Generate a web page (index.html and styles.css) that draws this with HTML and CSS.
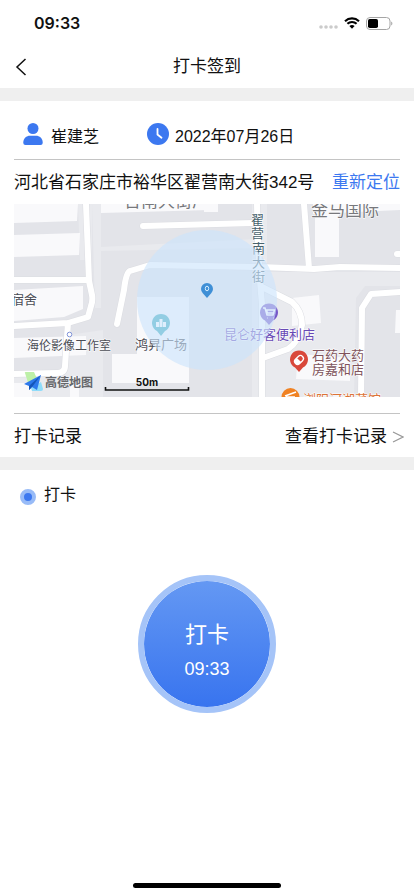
FILE: index.html
```html
<!DOCTYPE html>
<html lang="zh-CN">
<head>
    <meta charset="UTF-8">
    <meta name="viewport" content="width=device-width, initial-scale=1.0">
    <title>打卡签到</title>
    <link rel="stylesheet" href="styles.css">
</head>
<body>
    <div class="status-bar">
        <span class="status-time">09:33</span>
        <div class="status-icons">
            <svg width="20" height="4" viewBox="0 0 20 4" fill="#cbcbcb" aria-hidden="true">
                <circle cx="3" cy="2" r="1.8"/>
                <circle cx="8" cy="2" r="1.8"/>
                <circle cx="13" cy="2" r="1.8"/>
                <circle cx="18" cy="2" r="1.8"/>
            </svg>
            <svg width="16" height="12" viewBox="0 0 16 12" aria-hidden="true">
                <path d="M1 4.2a10.2 10.2 0 0 1 14 0M3.4 6.8a6.6 6.6 0 0 1 9.2 0" fill="none" stroke="#000" stroke-width="2.1"/>
                <path d="M8 11.8 5.4 9.1a3.8 3.8 0 0 1 5.2 0z"/>
            </svg>
            <svg width="27" height="13" viewBox="0 0 27 13" aria-hidden="true">
                <rect x=".5" y=".5" width="23.5" height="12" rx="3.5" fill="none" stroke="#a5a5a5"/>
                <rect x="2" y="2" width="10" height="9" rx="1.8"/>
                <path d="M25.2 4.6v4c1.6-.7 1.6-3.3 0-4z" fill="#a5a5a5"/>
            </svg>
        </div>
    </div>

    <header class="nav-bar">
        <button class="back" type="button" aria-label="返回">
            <svg width="12" height="18" viewBox="0 0 12 18" fill="none" stroke="#111" stroke-width="1.5"><path d="M10.5 1 2 9l8.5 8"/></svg>
        </button>
        <h1>打卡签到</h1>
    </header>

    <main>
        <section class="card">
            <div class="info">
                <div class="info-item user">
                    <svg width="20" height="22" viewBox="0 0 20 22" fill="#3c78f0" aria-hidden="true">
                        <circle cx="10" cy="5.5" r="5.5"/>
                        <path d="M.3 19.5C.3 15.5 3.5 12.8 7 12.8h6c3.5 0 6.7 2.7 6.7 6.7 0 1.7-.8 2.5-2.2 2.5h-15C1.1 22 .3 21.2.3 19.5z"/>
                    </svg>
                    <span>崔建芝</span>
                </div>
                <div class="info-item">
                    <svg width="22" height="22" viewBox="0 0 22 22" aria-hidden="true">
                        <circle cx="11" cy="11" r="11" fill="#3c78f0"/>
                        <path d="M10.5 6v5.5l4 3.3" fill="none" stroke="#fff" stroke-width="1.8" stroke-linecap="round"/>
                    </svg>
                    <span>2022年07月26日</span>
                </div>
            </div>

            <div class="address">
                <span>河北省石家庄市裕华区翟营南大街342号</span>
                <button class="relocate" type="button">重新定位</button>
            </div>

            <svg class="map" viewBox="14 204 386 193" role="img" aria-label="地图">
                <rect x="14" y="204" width="386" height="193" fill="#e3e4e9"/>

                <!-- blocks -->
                <g fill="#e9eaee">
                    <path d="M92 204h9v43l156-8v9L101 251v57h-6zM252 204h15v193h-15zM267 272h133v14h-35l-9 12-2 99h-90z"/>
                    <path d="M68 335l35-5v67H14v-22h50zM78 204h14v56h-12z"/>
                </g>
                <g fill="#f9f9fb">
                    <path d="M14 204h64l-1 17-63 2zM14 235l66-2-1 22-65 2zM101 204h109v6l-109 3zM14 290l69-4v23l-19 8-50 4zM14 338l72-2v19l-72 3z"/>
                    <path d="M137 297h52v86h-77v-29h25zM204 204h14v8h-14zM315 211h24v46h-24zM313 204h87v6l-87 4zM292 298l27-3 2 28-29 3zM298 354l52 4v23l-54-2zM396 310h4v23h-5zM14 383h18v14H14zM70 376h9v21h-9z"/>
                </g>

                <!-- roads -->
                <g class="road-edge">
                    <path id="roads" d="M86 204l3 77 3 14q1 5-1 11l-3 11-20 6-54 3M14 280h75M68 323l-3 43q0 7-8 7l-43 1M143 226l110-3M117 324l7-34q2-18 6-19l20-6 110 2 54 2 26-2 60 1M257 204q1 60 5 100v93M304 204l5 64M262 287l30 15q10 9 10 23-3 17-14 24l-25 9M400 292l-29 2-9 14-1 89M397 254h6"/>
                </g>
                <use href="#roads" class="road"/>

                <!-- place names -->
                <g class="place grey">
                    <text x="124" y="207">台南大街厂</text>
                    <text x="311" y="216">金马国际</text>
                </g>
                <g class="place">
                    <text x="11" y="304">宿舍</text>
                    <text class="small" x="27" y="350">海伦影像工作室</text>
                    <text x="135" y="349">鸿昇广场</text>
                </g>
                <g class="place street">
                    <text x="251" y="224">翟</text>
                    <text x="251" y="238">营</text>
                    <text x="252" y="253">南</text>
                    <text x="252" y="267">大</text>
                    <text x="252" y="281">街</text>
                </g>
                <text class="place shop" x="224" y="339">昆仑好客便利店</text>
                <g class="place pharmacy">
                    <text x="312" y="360">石药大药</text>
                    <text x="312" y="374">房嘉和店</text>
                </g>
                <text class="place food" x="303" y="404">浏阳河湘菜馆</text>

                <!-- place pins -->
                <circle cx="69.5" cy="334.5" r="2.3" fill="#fff" stroke="#8093d8"/>
                <path d="M161 336l-4-5a9 9 0 1 1 8 0z" fill="#35a9bb"/>
                <path d="M156 327v-5h3v5zm3.5 0v-8h3v8zm3.5 0v-5h3v5z" fill="#fff"/>
                <path d="M269 325l-4-4.500a9 9 0 1 1 8 0z" fill="#7556c7"/>
                <path d="M263 308h2l2 7h6l1.5-5h-8l1 3h7M267 318h.5M273 318h.5" fill="none" stroke="#fff" stroke-width="1.5"/>
                <path d="M299 372l-4-4.500a9 9 0 1 1 8 0z" fill="#d9483b"/>
                <g transform="rotate(-45 299 360)">
                    <rect x="294" y="357" width="10" height="6" rx="3" fill="none" stroke="#fff" stroke-width="1.3"/>
                    <path d="M299 357h-2a3 3 0 0 0 0 6h2z" fill="#fff"/>
                </g>
                <circle cx="290.5" cy="397" r="9" fill="#f08223"/>
                <path d="M285 396l11-4M286 397h9" stroke="#fff" stroke-width="1.5"/>

                <!-- accuracy range and current position -->
                <circle cx="207" cy="300" r="70" fill="#cce3fb" fill-opacity=".62"/>
                <path d="M207 298l-4.200-4.700a6 6 0 1 1 8.400 0z" fill="#3f8fd6"/>
                <ellipse cx="207" cy="288.5" rx="1.7" ry="2.3" fill="none" stroke="#d9efff"/>

                <!-- map provider and scale -->
                <path d="M25 373q-1-1 1-1h8l4 9-9 5z" fill="#bdf0a8"/>
                <path d="M31 388l10-6 2 7q0 2-2 2h-9z" fill="#8fdcfa"/>
                <path d="M24 384l17-9-4 15-5-3-3 3v-4z" fill="#2d79ec"/>
                <path d="M29 386l12-11-9 12-3 3z" fill="#1555b8"/>
                <text class="brand" x="45" y="387">高德地图</text>
                <text class="scale" x="147" y="386" text-anchor="middle">50m</text>
                <path d="M105.5 387v3h83v-3" fill="none" stroke="#111" stroke-width="1.6"/>
            </svg>

            <div class="records">
                <span>打卡记录</span>
                <a href="#records">
                    查看打卡记录
                    <svg width="12" height="12" viewBox="0 0 12 12" fill="none" stroke="#999" stroke-width="1.2" aria-hidden="true"><path d="M1 1l10 5-10 5"/></svg>
                </a>
            </div>
        </section>

        <section class="punch">
            <h2><i class="dot"></i>打卡</h2>
            <button class="punch-btn" type="button">
                <span class="punch-label">打卡</span>
                <span class="punch-time">09:33</span>
            </button>
        </section>
    </main>

    <div class="home-indicator"></div>
</body>
</html>
```
FILE: styles.css
```css
* { box-sizing: border-box; }
body {
    display: flex;
    flex-direction: column;
    min-height: 100vh;
    margin: 0;
    background: #fff;
    color: #111;
    font-family: "Liberation Sans", "Noto Sans CJK SC", sans-serif;
    font-size: 17px;
    line-height: 24px;
}
h1, h2 { margin: 0; font-size: 17px; font-weight: 400; }
button { padding: 0; border: 0; background: none; color: inherit; font: inherit; cursor: pointer; }
svg { display: block; flex: none; }

.status-bar {
    display: flex;
    align-items: center;
    justify-content: space-between;
    height: 44px;
    padding: 2px 21px 0 34px;
}
.status-time { font-family: Inter, sans-serif; font-size: 16px; font-weight: 600; }
.status-icons { display: flex; align-items: center; gap: 6px; }
.status-icons svg:first-child { margin-top: 8px; }

.nav-bar {
    display: grid;
    grid-template-columns: 44px 1fr 44px;
    align-items: center;
    height: 44px;
    padding-top: 2px;
    text-align: center;
}
.back { display: flex; align-items: center; height: 40px; padding-left: 15px; }

.card { padding: 0 14px; border: solid #efefef; border-width: 13px 0; }
.info {
    display: flex;
    align-items: center;
    height: 59px;
    padding: 12px 9px 0;
    border-bottom: 1px solid #c4c4c4;
    font-size: 16px;
}
.info-item { display: flex; align-items: flex-end; gap: 6px; }
.info-item svg { margin-bottom: 4px; }
.user { width: 124px; gap: 8px; }

.address {
    display: flex;
    align-items: center;
    justify-content: space-between;
    min-height: 44px;
    padding-top: 2px;
    white-space: nowrap;
}
.relocate { color: #3c78f0; }

.map { width: 100%; height: auto; }
.road-edge { fill: none; stroke: #dcdde2; stroke-width: 7; stroke-linecap: round; stroke-linejoin: round; }
.road { fill: none; stroke: #fff; stroke-width: 6; stroke-linecap: round; stroke-linejoin: round; }
.place {
    fill: #4a4c55;
    stroke: #fff;
    stroke-width: 1px;
    paint-order: stroke;
    font-family: "Noto Sans CJK SC", sans-serif;
    font-size: 13px;
}
.small { font-size: 12px; }
.grey { fill: #77787c; font-size: 17px; }
.street { fill: #49636e; }
.shop { fill: #6849b5; }
.pharmacy { fill: #80535b; }
.food { fill: #dc7337; }
.brand { fill: #66676b; font-family: "Noto Sans CJK SC", sans-serif; font-size: 12px; font-weight: 700; }
.scale { fill: #111; font-family: Inter, sans-serif; font-size: 10px; font-weight: 700; }

.records {
    display: flex;
    align-items: center;
    justify-content: space-between;
    min-height: 44px;
    margin-top: 16px;
    padding-top: 2px;
    border-top: 1px solid #c4c4c4;
}
.records a { display: flex; align-items: center; gap: 5px; margin-right: -4px; color: inherit; text-decoration: none; }

.punch { display: flex; flex-direction: column; padding: 13px 20px; }
.punch h2 { display: flex; align-items: center; gap: 8px; font-size: 16px; }
.dot {
    width: 16px;
    height: 16px;
    margin-top: 4px;
    border: 4px solid #98bbf7;
    border-radius: 50%;
    background: #3c78f0;
}
.punch-btn {
    display: flex;
    flex-direction: column;
    align-items: center;
    justify-content: center;
    gap: 8px;
    align-self: center;
    width: 138px;
    height: 138px;
    margin-top: 68px;
    padding-top: 14px;
    border: 6px solid #a5c4f8;
    border-radius: 50%;
    background: linear-gradient(#6498f3, #3874ef) padding-box;
    color: #fff;
}
.punch-label { font-size: 22px; line-height: 28px; }
.punch-time { font-size: 18px; }

.home-indicator {
    width: 148px;
    height: 5px;
    margin: auto auto 8px;
    border-radius: 3px;
    background: #000;
}
```
